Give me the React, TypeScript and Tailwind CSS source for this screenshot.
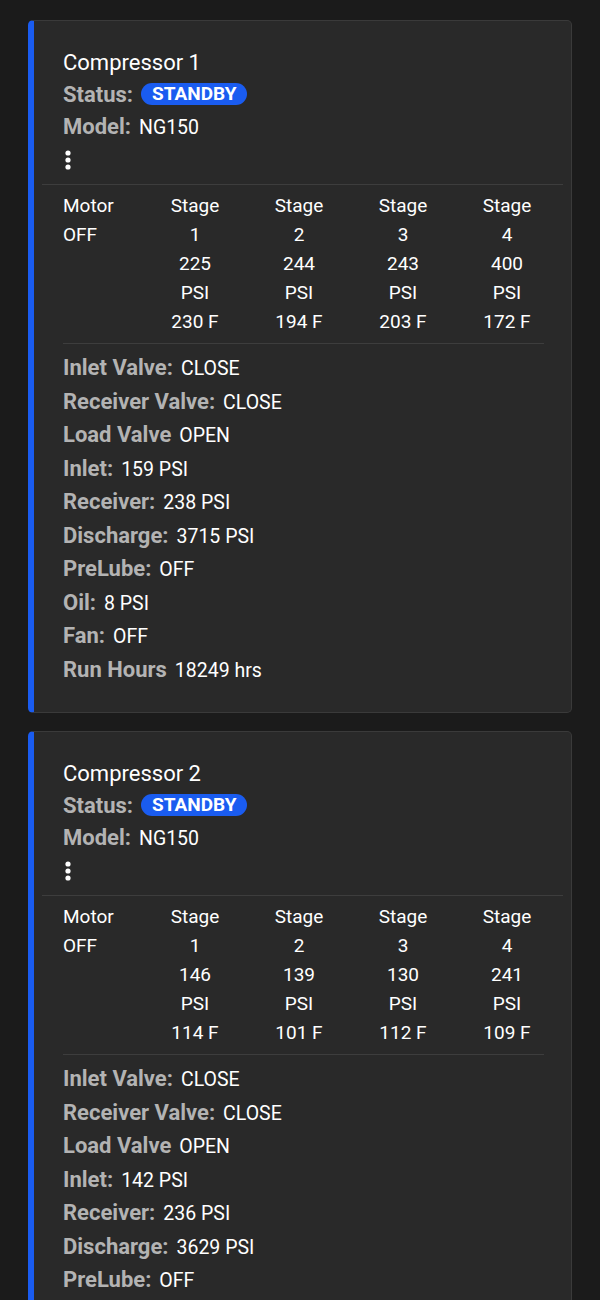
type Stage = { psi: number; temp: number };

type Compressor = {
  name: string;
  status: string;
  model: string;
  motor: string;
  stages: Stage[];
  inletValve: string;
  receiverValve: string;
  loadValve: string;
  inlet: number;
  receiver: number;
  discharge: number;
  preLube: string;
  oil: number;
  fan: string;
  runHours: number;
};

const compressors: Compressor[] = [
  {
    name: 'Compressor 1',
    status: 'STANDBY',
    model: 'NG150',
    motor: 'OFF',
    stages: [
      { psi: 225, temp: 230 },
      { psi: 244, temp: 194 },
      { psi: 243, temp: 203 },
      { psi: 400, temp: 172 },
    ],
    inletValve: 'CLOSE',
    receiverValve: 'CLOSE',
    loadValve: 'OPEN',
    inlet: 159,
    receiver: 238,
    discharge: 3715,
    preLube: 'OFF',
    oil: 8,
    fan: 'OFF',
    runHours: 18249,
  },
  {
    name: 'Compressor 2',
    status: 'STANDBY',
    model: 'NG150',
    motor: 'OFF',
    stages: [
      { psi: 146, temp: 114 },
      { psi: 139, temp: 101 },
      { psi: 130, temp: 112 },
      { psi: 241, temp: 109 },
    ],
    inletValve: 'CLOSE',
    receiverValve: 'CLOSE',
    loadValve: 'OPEN',
    inlet: 142,
    receiver: 236,
    discharge: 3629,
    preLube: 'OFF',
    oil: 6,
    fan: 'OFF',
    runHours: 17904,
  },
];

function Field({ label, value }: { label: string; value: string }) {
  return (
    <div className="flex items-baseline gap-[8px] h-[33.5px] leading-[33.5px]">
      <span className="text-[22px] font-bold text-[#b3b3b3]">{label}</span>
      <span className="text-[19.5px] text-white">{value}</span>
    </div>
  );
}

function Kebab() {
  return (
    <svg width="8" height="20" viewBox="0 0 8 20" className="block">
      <circle cx="4" cy="3" r="2.6" fill="#fff" />
      <circle cx="4" cy="10" r="2.6" fill="#fff" />
      <circle cx="4" cy="17" r="2.6" fill="#fff" />
    </svg>
  );
}

function CompressorCard({ c }: { c: Compressor }) {
  return (
    <div className="rounded-[5px] border border-[#3a3a3a] border-l-[6px] border-l-[#1a5cf0] bg-[#292929] pb-[26px]">
      <div className="pl-[29px] pr-[27px] pt-[27px] pb-[14px]">
        <div className="text-[22px] leading-[30px] text-white">{c.name}</div>
        <div className="flex items-center gap-[8px] h-[32px]">
          <span className="text-[22px] font-bold text-[#b3b3b3]">Status:</span>
          <span className="rounded-full bg-[#1a5cf0] px-[11px] text-[19px] leading-[22px] font-bold text-white">
            {c.status}
          </span>
        </div>
        <div className="flex items-baseline gap-[8px] h-[33px] leading-[33px]">
          <span className="text-[22px] font-bold text-[#b3b3b3]">Model:</span>
          <span className="text-[19.5px] text-white">{c.model}</span>
        </div>
        <div className="pt-[7px] pl-[1px]">
          <Kebab />
        </div>
      </div>

      <div className="mx-[8px] border-t border-[#3d3d3d]" />

      <div className="pl-[29px] pr-[27px] pt-[6px]">
        <div className="grid grid-cols-[80px_repeat(4,104px)] text-[19px] leading-[29px] text-white">
          <div className="flex flex-col">
            <span>Motor</span>
            <span>{c.motor}</span>
          </div>
          {c.stages.map((s, i) => (
            <div key={i} className="flex flex-col items-center">
              <span>Stage</span>
              <span>{i + 1}</span>
              <span>{s.psi}</span>
              <span>PSI</span>
              <span>{s.temp} F</span>
            </div>
          ))}
        </div>

        <div className="mt-[7px] border-t border-[#3d3d3d]" />

        <div className="pt-[7px]">
          <Field label="Inlet Valve:" value={c.inletValve} />
          <Field label="Receiver Valve:" value={c.receiverValve} />
          <Field label="Load Valve" value={c.loadValve} />
          <Field label="Inlet:" value={`${c.inlet} PSI`} />
          <Field label="Receiver:" value={`${c.receiver} PSI`} />
          <Field label="Discharge:" value={`${c.discharge} PSI`} />
          <Field label="PreLube:" value={c.preLube} />
          <Field label="Oil:" value={`${c.oil} PSI`} />
          <Field label="Fan:" value={c.fan} />
          <Field label="Run Hours" value={`${c.runHours} hrs`} />
        </div>
      </div>
    </div>
  );
}

export default function App() {
  return (
    <div className="min-h-screen bg-[#1b1b1b] font-['Roboto',sans-serif] px-[28px] pt-[20px] pb-[20px]">
      <div className="flex flex-col gap-[18px] w-[544px]">
        {compressors.map((c) => (
          <CompressorCard key={c.name} c={c} />
        ))}
      </div>
    </div>
  );
}
